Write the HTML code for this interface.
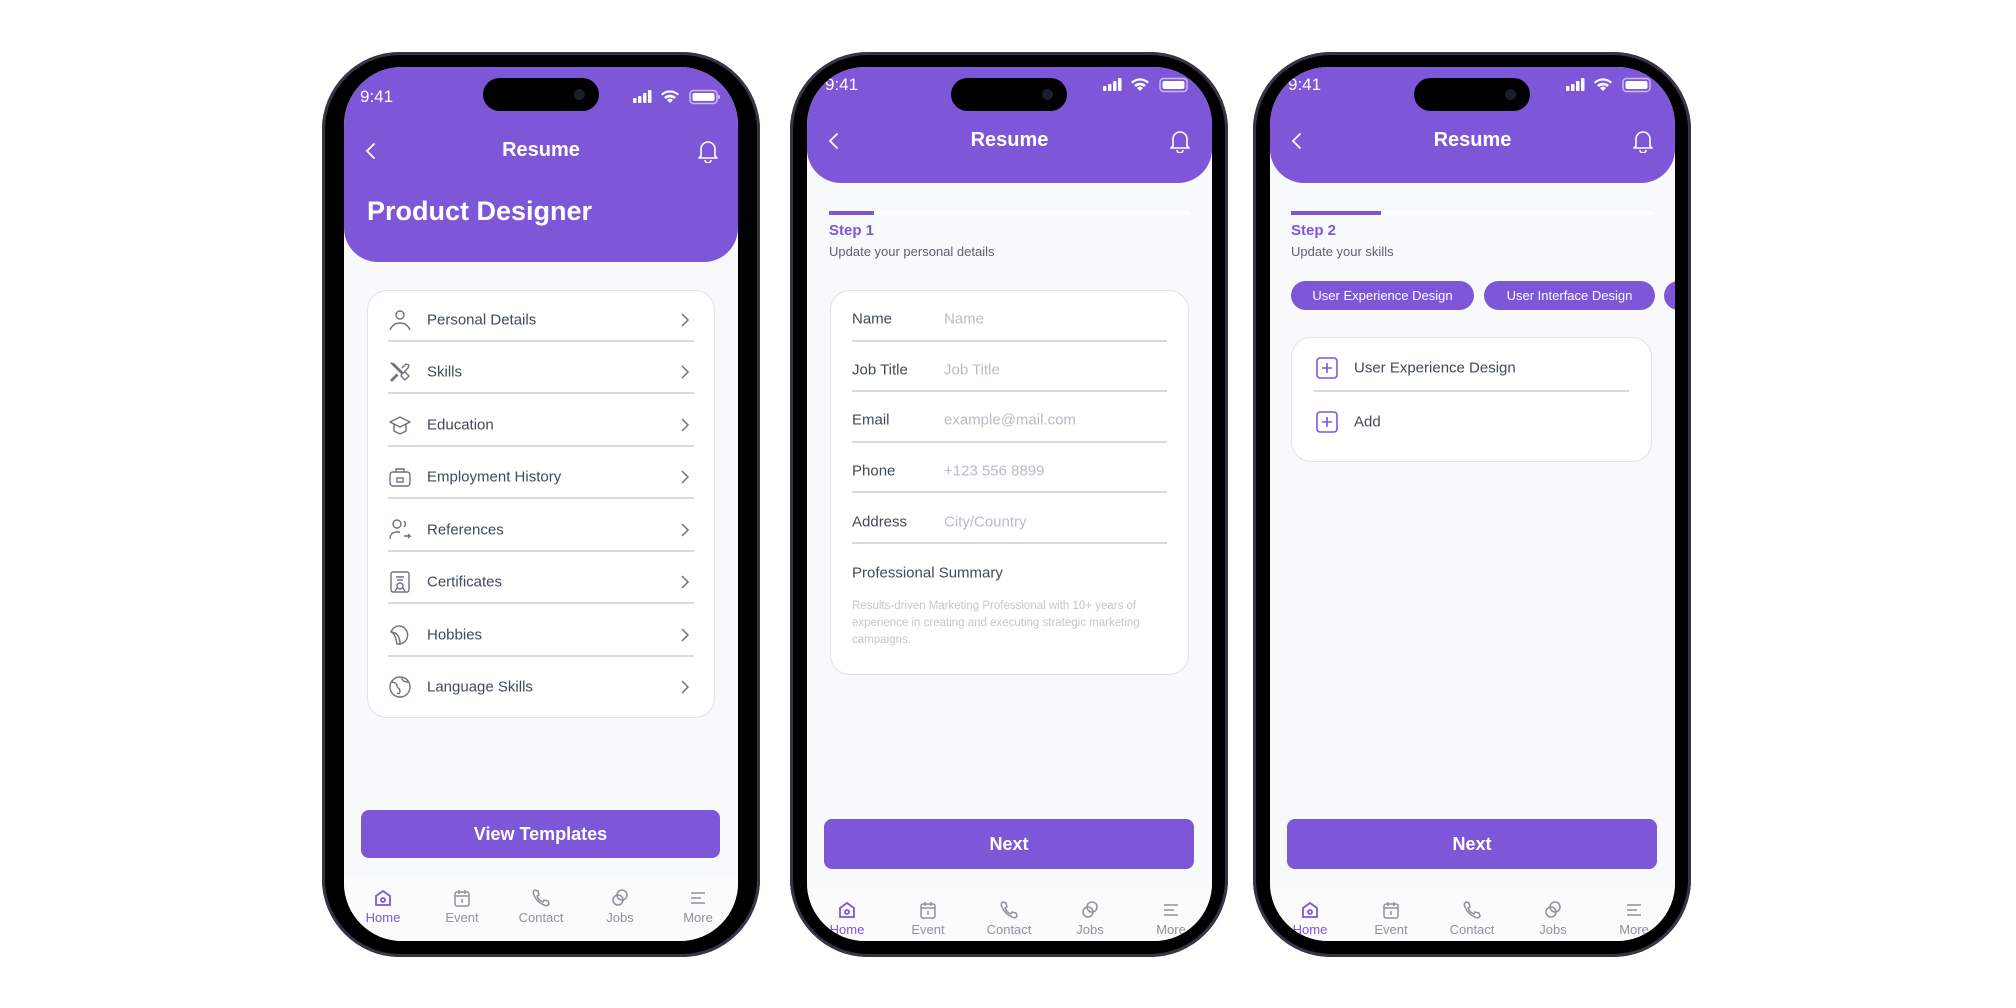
<!DOCTYPE html>
<html><head><meta charset="utf-8"><style>
*{margin:0;padding:0;box-sizing:border-box}
body{width:2016px;height:1008px;background:#fff;position:relative;overflow:hidden;font-family:"Liberation Sans",sans-serif}
.ph{position:absolute;top:52px;width:438px;height:905px;border-radius:78px;background:#000;box-shadow:0 0 0 3px #3b3248 inset}
.sc{position:absolute;top:15px;height:874px;border-radius:58px;overflow:hidden;background:#f8f9fb}
.a{position:absolute}
.hd{position:absolute;left:0;top:0;width:100%;background:#7e57d9;border-radius:0 0 34px 34px}
.time{position:absolute;color:#fff;font-size:17px}
.isl{position:absolute;background:#000;border-radius:22px;height:33px;width:116px}
.isl:after{content:"";position:absolute;right:14px;top:11px;width:11px;height:11px;border-radius:50%;background:#1a1f2e}
.ttl{position:absolute;width:100%;text-align:center;color:#fff;font-weight:bold;font-size:20px}
.card{position:absolute;background:#fff;border:1.5px solid #dfe2ea;border-radius:20px}
.row{position:absolute;height:1.5px;background:#d6dae2}
.lbl{position:absolute;color:#3f4a5c;font-size:15px;transform:translateY(-50%);white-space:nowrap}
.pl{position:absolute;color:#b8bcc6;font-size:15px;transform:translateY(-50%);white-space:nowrap}
.btn{position:absolute;background:#7e57d9;border-radius:8px;color:#fff;font-weight:bold;font-size:18px;display:flex;align-items:center;justify-content:center}
.nav{position:absolute;left:0;width:100%;height:90px;background:#fbfbfc}
.ni{position:absolute;width:70px;margin-left:-35px;text-align:center;font-size:13px;color:#8e929c}
.ni svg{display:block;margin:0 auto 2px}
.ni.on{color:#7e57d9}
.chip{position:absolute;height:29px;border-radius:15px;background:#7e57d9;color:#fff;font-size:13px;line-height:29px;text-align:center;white-space:nowrap}
.ic{position:absolute;transform:translateY(-50%)}
.chev{position:absolute;transform:translateY(-50%)}
</style></head><body>

<!-- ===== PHONE 1 ===== -->
<div class="ph" style="left:322px">
 <div class="sc" style="left:22px;width:394px">
  <div class="hd" style="height:195px"></div>
  <div class="time" style="left:16px;top:20px">9:41</div>
  <div class="isl" style="left:139px;top:11px"></div>
  <svg class="a" style="left:289px;top:22px" width="88" height="16" viewBox="0 0 88 16"><g fill="#fff"><rect x="0" y="9" width="3.5" height="5" rx="1"/><rect x="5" y="7" width="3.5" height="7" rx="1"/><rect x="10" y="4" width="3.5" height="10" rx="1"/><rect x="15" y="1" width="3.5" height="13" rx="1"/><path d="M37 14l3-3a4 4 0 00-6 0zM31 8a9 9 0 0112 0l-2 2a6 6 0 00-8 0zM28 5a13 13 0 0118 0l-1.5 1.5a11 11 0 00-15 0z"/><rect x="57" y="1.5" width="27" height="13" rx="3.5" fill="none" stroke="#fff" stroke-width="1.5" opacity=".6"/><rect x="59.5" y="4" width="22" height="8" rx="2"/><rect x="85" y="6" width="2" height="4" rx="1" opacity=".6"/></g></svg>
  <svg class="a" style="left:20px;top:75px" width="14" height="18" viewBox="0 0 14 18"><path d="M10 2L3 9l7 7" fill="none" stroke="#fff" stroke-width="1.8" stroke-linecap="round"/></svg>
  <div class="ttl" style="top:72px">Resume</div>
  <svg class="a" style="left:353px;top:72px" width="22" height="24" viewBox="0 0 22 24"><path d="M4 17V10a7 7 0 0114 0v7l2 2H2zM8 21a3 3 0 006 0" fill="none" stroke="#fff" stroke-width="1.6" stroke-linejoin="round"/></svg>
  <div class="a" style="left:23px;top:129px;color:#fff;font-weight:bold;font-size:27px">Product Designer</div>

  <div class="card" style="left:23px;top:223px;width:348px;height:428px"></div>
  <div class="row" style="left:44px;width:306px;top:273px"></div>
  <div class="row" style="left:44px;width:306px;top:325px"></div>
  <div class="row" style="left:44px;width:306px;top:378px"></div>
  <div class="row" style="left:44px;width:306px;top:430px"></div>
  <div class="row" style="left:44px;width:306px;top:483px"></div>
  <div class="row" style="left:44px;width:306px;top:535px"></div>
  <div class="row" style="left:44px;width:306px;top:588px"></div>

  <svg class="ic" style="left:44px;top:253px" width="24" height="24" viewBox="0 0 24 24" fill="none" stroke="#6b7280" stroke-width="1.4"><circle cx="12" cy="7" r="4"/><path d="M2 22c2-5 6-7 10-7s8 2 10 7"/></svg>
  <svg class="ic" style="left:44px;top:305px" width="24" height="24" viewBox="0 0 24 24" fill="none" stroke="#6b7280" stroke-width="1.4" stroke-linejoin="round"><path d="M3 3l3 1 9 9 2-1 4 4-4 4-4-4 1-2-9-9zM14 8l4-4 3 1-1 3-4 4M9 14l-6 6 1 1 6-6"/></svg>
  <svg class="ic" style="left:44px;top:358px" width="24" height="24" viewBox="0 0 24 24" fill="none" stroke="#6b7280" stroke-width="1.4" stroke-linejoin="round"><path d="M2 9l10-5 10 5-10 5zM6 11v7l6 3 6-3v-7"/></svg>
  <svg class="ic" style="left:44px;top:410px" width="24" height="24" viewBox="0 0 24 24" fill="none" stroke="#6b7280" stroke-width="1.4"><rect x="2" y="7" width="20" height="14" rx="3"/><path d="M8 7V4h8v3"/><rect x="9" y="13" width="6" height="4"/></svg>
  <svg class="ic" style="left:44px;top:463px" width="24" height="24" viewBox="0 0 24 24" fill="none" stroke="#6b7280" stroke-width="1.4"><circle cx="9" cy="6" r="4"/><path d="M2 21c0-5 3-7 7-7h3M16 3a4 4 0 010 6M16 18h6l-2-2M22 18l-2 2"/></svg>
  <svg class="ic" style="left:44px;top:515px" width="24" height="24" viewBox="0 0 24 24" fill="none" stroke="#6b7280" stroke-width="1.4"><rect x="3" y="2" width="18" height="20" rx="2"/><path d="M8 7h8M9 10h6"/><circle cx="12" cy="16" r="3"/><path d="M9 18l-2 3M15 18l2 3"/></svg>
  <svg class="ic" style="left:44px;top:568px" width="24" height="24" viewBox="0 0 24 24" fill="none" stroke="#6b7280" stroke-width="1.4"><path d="M12 3a9 9 0 11-3 18C8 14 6 10 3 9a9 9 0 019-6zM3 9c5 0 9 4 9 12"/></svg>
  <svg class="ic" style="left:44px;top:620px" width="24" height="24" viewBox="0 0 24 24" fill="none" stroke="#6b7280" stroke-width="1.4"><circle cx="12" cy="12" r="10"/><path d="M4 7c3 0 5 2 5 4s3 2 3 5-2 3-3 2M14 3c0 3 3 4 6 4"/></svg>

  <div class="lbl" style="left:83px;top:253px">Personal Details</div>
  <div class="lbl" style="left:83px;top:305px">Skills</div>
  <div class="lbl" style="left:83px;top:358px">Education</div>
  <div class="lbl" style="left:83px;top:410px">Employment History</div>
  <div class="lbl" style="left:83px;top:463px">References</div>
  <div class="lbl" style="left:83px;top:515px">Certificates</div>
  <div class="lbl" style="left:83px;top:568px">Hobbies</div>
  <div class="lbl" style="left:83px;top:620px">Language Skills</div>

  <svg class="chev" style="left:336px;top:253px" width="10" height="14" viewBox="0 0 10 14"><path d="M2 1l6 6-6 6" fill="none" stroke="#6b7280" stroke-width="1.5"/></svg>
  <svg class="chev" style="left:336px;top:305px" width="10" height="14" viewBox="0 0 10 14"><path d="M2 1l6 6-6 6" fill="none" stroke="#6b7280" stroke-width="1.5"/></svg>
  <svg class="chev" style="left:336px;top:358px" width="10" height="14" viewBox="0 0 10 14"><path d="M2 1l6 6-6 6" fill="none" stroke="#6b7280" stroke-width="1.5"/></svg>
  <svg class="chev" style="left:336px;top:410px" width="10" height="14" viewBox="0 0 10 14"><path d="M2 1l6 6-6 6" fill="none" stroke="#6b7280" stroke-width="1.5"/></svg>
  <svg class="chev" style="left:336px;top:463px" width="10" height="14" viewBox="0 0 10 14"><path d="M2 1l6 6-6 6" fill="none" stroke="#6b7280" stroke-width="1.5"/></svg>
  <svg class="chev" style="left:336px;top:515px" width="10" height="14" viewBox="0 0 10 14"><path d="M2 1l6 6-6 6" fill="none" stroke="#6b7280" stroke-width="1.5"/></svg>
  <svg class="chev" style="left:336px;top:568px" width="10" height="14" viewBox="0 0 10 14"><path d="M2 1l6 6-6 6" fill="none" stroke="#6b7280" stroke-width="1.5"/></svg>
  <svg class="chev" style="left:336px;top:620px" width="10" height="14" viewBox="0 0 10 14"><path d="M2 1l6 6-6 6" fill="none" stroke="#6b7280" stroke-width="1.5"/></svg>

  <div class="btn" style="left:17px;top:743px;width:359px;height:48px">View Templates</div>
  <div class="nav" style="top:809px"></div>
  <div class="ni on" style="left:39px;top:821px"><svg width="20" height="20" viewBox="0 0 20 20" fill="none" stroke="#7e57d9" stroke-width="1.8"><path d="M3 8l7-5 7 5v9H3z"/><circle cx="10" cy="12" r="2"/></svg>Home</div>
  <div class="ni" style="left:118px;top:821px"><svg width="20" height="20" viewBox="0 0 20 20" fill="none" stroke="#8e929c" stroke-width="1.5"><rect x="3" y="4" width="14" height="14" rx="2"/><path d="M3 8h14M7 2v4M13 2v4M10 11v4"/></svg>Event</div>
  <div class="ni" style="left:197px;top:821px"><svg width="20" height="20" viewBox="0 0 20 20" fill="none" stroke="#8e929c" stroke-width="1.5"><path d="M4 2l3 1 1 4-2 1c1 3 3 5 6 6l1-2 4 1 1 3c-1 2-3 2-5 1C8 15 5 12 3 7 2 5 2 3 4 2z"/></svg>Contact</div>
  <div class="ni" style="left:276px;top:821px"><svg width="20" height="20" viewBox="0 0 20 20" fill="none" stroke="#8e929c" stroke-width="1.5"><circle cx="8" cy="12" r="5"/><circle cx="12" cy="7" r="5"/></svg>Jobs</div>
  <div class="ni" style="left:354px;top:821px"><svg width="20" height="20" viewBox="0 0 20 20" fill="none" stroke="#8e929c" stroke-width="1.5"><path d="M3 5h14M3 10h10M3 15h14"/></svg>More</div>
 </div>
</div>

<!-- ===== PHONE 2 ===== -->
<div class="ph" style="left:790px">
 <div class="sc" style="left:17px;width:405px">
  <div class="hd" style="height:116px"></div>
  <div class="time" style="left:18px;top:8px">9:41</div>
  <div class="isl" style="left:144px;top:11px"></div>
  <svg class="a" style="left:296px;top:10px" width="88" height="16" viewBox="0 0 88 16"><g fill="#fff"><rect x="0" y="9" width="3.5" height="5" rx="1"/><rect x="5" y="7" width="3.5" height="7" rx="1"/><rect x="10" y="4" width="3.5" height="10" rx="1"/><rect x="15" y="1" width="3.5" height="13" rx="1"/><path d="M37 14l3-3a4 4 0 00-6 0zM31 8a9 9 0 0112 0l-2 2a6 6 0 00-8 0zM28 5a13 13 0 0118 0l-1.5 1.5a11 11 0 00-15 0z"/><rect x="57" y="1.5" width="27" height="13" rx="3.5" fill="none" stroke="#fff" stroke-width="1.5" opacity=".6"/><rect x="59.5" y="4" width="22" height="8" rx="2"/></g></svg>
  <svg class="a" style="left:20px;top:65px" width="14" height="18" viewBox="0 0 14 18"><path d="M10 2L3 9l7 7" fill="none" stroke="#fff" stroke-width="1.8" stroke-linecap="round"/></svg>
  <div class="ttl" style="top:62px">Resume</div>
  <svg class="a" style="left:362px;top:62px" width="22" height="24" viewBox="0 0 22 24"><path d="M4 17V10a7 7 0 0114 0v7l2 2H2zM8 21a3 3 0 006 0" fill="none" stroke="#fff" stroke-width="1.6" stroke-linejoin="round"/></svg>

  <div class="a" style="left:22px;top:144px;width:361px;height:4px;background:#fff"></div>
  <div class="a" style="left:22px;top:144px;width:45px;height:4px;background:#7e57d9"></div>
  <div class="a" style="left:22px;top:155px;color:#7e57d9;font-weight:bold;font-size:15px">Step 1</div>
  <div class="a" style="left:22px;top:177px;color:#5b616d;font-size:13px">Update your personal details</div>

  <div class="card" style="left:23px;top:223px;width:359px;height:385px"></div>
  <div class="lbl" style="left:45px;top:252px">Name</div><div class="pl" style="left:137px;top:252px">Name</div>
  <div class="row" style="left:45px;width:315px;top:273px"></div>
  <div class="lbl" style="left:45px;top:303px">Job Title</div><div class="pl" style="left:137px;top:303px">Job Title</div>
  <div class="row" style="left:45px;width:315px;top:323px"></div>
  <div class="lbl" style="left:45px;top:353px">Email</div><div class="pl" style="left:137px;top:353px">example@mail.com</div>
  <div class="row" style="left:45px;width:315px;top:374px"></div>
  <div class="lbl" style="left:45px;top:404px">Phone</div><div class="pl" style="left:137px;top:404px">+123 556 8899</div>
  <div class="row" style="left:45px;width:315px;top:424px"></div>
  <div class="lbl" style="left:45px;top:455px">Address</div><div class="pl" style="left:137px;top:455px">City/Country</div>
  <div class="row" style="left:45px;width:315px;top:475px"></div>
  <div class="lbl" style="left:45px;top:506px">Professional Summary</div>
  <div class="a" style="left:45px;top:531px;width:318px;color:#c3c6cd;font-size:11.5px;line-height:17px">Results-driven Marketing Professional with 10+ years of experience in creating and executing strategic marketing campaigns.</div>

  <div class="btn" style="left:17px;top:752px;width:370px;height:50px">Next</div>
  <div class="nav" style="top:820px"></div>
  <div class="ni on" style="left:40px;top:833px"><svg width="20" height="20" viewBox="0 0 20 20" fill="none" stroke="#7e57d9" stroke-width="1.8"><path d="M3 8l7-5 7 5v9H3z"/><circle cx="10" cy="12" r="2"/></svg>Home</div>
  <div class="ni" style="left:121px;top:833px"><svg width="20" height="20" viewBox="0 0 20 20" fill="none" stroke="#8e929c" stroke-width="1.5"><rect x="3" y="4" width="14" height="14" rx="2"/><path d="M3 8h14M7 2v4M13 2v4M10 11v4"/></svg>Event</div>
  <div class="ni" style="left:202px;top:833px"><svg width="20" height="20" viewBox="0 0 20 20" fill="none" stroke="#8e929c" stroke-width="1.5"><path d="M4 2l3 1 1 4-2 1c1 3 3 5 6 6l1-2 4 1 1 3c-1 2-3 2-5 1C8 15 5 12 3 7 2 5 2 3 4 2z"/></svg>Contact</div>
  <div class="ni" style="left:283px;top:833px"><svg width="20" height="20" viewBox="0 0 20 20" fill="none" stroke="#8e929c" stroke-width="1.5"><circle cx="8" cy="12" r="5"/><circle cx="12" cy="7" r="5"/></svg>Jobs</div>
  <div class="ni" style="left:364px;top:833px"><svg width="20" height="20" viewBox="0 0 20 20" fill="none" stroke="#8e929c" stroke-width="1.5"><path d="M3 5h14M3 10h10M3 15h14"/></svg>More</div>
 </div>
</div>

<!-- ===== PHONE 3 ===== -->
<div class="ph" style="left:1253px">
 <div class="sc" style="left:17px;width:405px">
  <div class="hd" style="height:116px"></div>
  <div class="time" style="left:18px;top:8px">9:41</div>
  <div class="isl" style="left:144px;top:11px"></div>
  <svg class="a" style="left:296px;top:10px" width="88" height="16" viewBox="0 0 88 16"><g fill="#fff"><rect x="0" y="9" width="3.5" height="5" rx="1"/><rect x="5" y="7" width="3.5" height="7" rx="1"/><rect x="10" y="4" width="3.5" height="10" rx="1"/><rect x="15" y="1" width="3.5" height="13" rx="1"/><path d="M37 14l3-3a4 4 0 00-6 0zM31 8a9 9 0 0112 0l-2 2a6 6 0 00-8 0zM28 5a13 13 0 0118 0l-1.5 1.5a11 11 0 00-15 0z"/><rect x="57" y="1.5" width="27" height="13" rx="3.5" fill="none" stroke="#fff" stroke-width="1.5" opacity=".6"/><rect x="59.5" y="4" width="22" height="8" rx="2"/></g></svg>
  <svg class="a" style="left:20px;top:65px" width="14" height="18" viewBox="0 0 14 18"><path d="M10 2L3 9l7 7" fill="none" stroke="#fff" stroke-width="1.8" stroke-linecap="round"/></svg>
  <div class="ttl" style="top:62px">Resume</div>
  <svg class="a" style="left:362px;top:62px" width="22" height="24" viewBox="0 0 22 24"><path d="M4 17V10a7 7 0 0114 0v7l2 2H2zM8 21a3 3 0 006 0" fill="none" stroke="#fff" stroke-width="1.6" stroke-linejoin="round"/></svg>

  <div class="a" style="left:21px;top:144px;width:361px;height:4px;background:#fff"></div>
  <div class="a" style="left:21px;top:144px;width:90px;height:4px;background:#7e57d9"></div>
  <div class="a" style="left:21px;top:155px;color:#7e57d9;font-weight:bold;font-size:15px">Step 2</div>
  <div class="a" style="left:21px;top:177px;color:#5b616d;font-size:13px">Update your skills</div>
  <div class="chip" style="left:21px;top:214px;width:183px">User Experience Design</div>
  <div class="chip" style="left:214px;top:214px;width:171px">User Interface Design</div>
  <div class="chip" style="left:394px;top:214px;width:60px"></div>

  <div class="card" style="left:21px;top:270px;width:361px;height:125px"></div>
  <svg class="ic" style="left:46px;top:301px" width="22" height="22" viewBox="0 0 22 22" fill="none" stroke="#7e57d9" stroke-width="1.6"><rect x="1" y="1" width="20" height="20" rx="3"/><path d="M11 6v10M6 11h10"/></svg>
  <div class="lbl" style="left:84px;top:301px">User Experience Design</div>
  <div class="row" style="left:44px;width:315px;top:323px"></div>
  <svg class="ic" style="left:46px;top:355px" width="22" height="22" viewBox="0 0 22 22" fill="none" stroke="#7e57d9" stroke-width="1.6"><rect x="1" y="1" width="20" height="20" rx="3"/><path d="M11 6v10M6 11h10"/></svg>
  <div class="lbl" style="left:84px;top:355px">Add</div>

  <div class="btn" style="left:17px;top:752px;width:370px;height:50px">Next</div>
  <div class="nav" style="top:820px"></div>
  <div class="ni on" style="left:40px;top:833px"><svg width="20" height="20" viewBox="0 0 20 20" fill="none" stroke="#7e57d9" stroke-width="1.8"><path d="M3 8l7-5 7 5v9H3z"/><circle cx="10" cy="12" r="2"/></svg>Home</div>
  <div class="ni" style="left:121px;top:833px"><svg width="20" height="20" viewBox="0 0 20 20" fill="none" stroke="#8e929c" stroke-width="1.5"><rect x="3" y="4" width="14" height="14" rx="2"/><path d="M3 8h14M7 2v4M13 2v4M10 11v4"/></svg>Event</div>
  <div class="ni" style="left:202px;top:833px"><svg width="20" height="20" viewBox="0 0 20 20" fill="none" stroke="#8e929c" stroke-width="1.5"><path d="M4 2l3 1 1 4-2 1c1 3 3 5 6 6l1-2 4 1 1 3c-1 2-3 2-5 1C8 15 5 12 3 7 2 5 2 3 4 2z"/></svg>Contact</div>
  <div class="ni" style="left:283px;top:833px"><svg width="20" height="20" viewBox="0 0 20 20" fill="none" stroke="#8e929c" stroke-width="1.5"><circle cx="8" cy="12" r="5"/><circle cx="12" cy="7" r="5"/></svg>Jobs</div>
  <div class="ni" style="left:364px;top:833px"><svg width="20" height="20" viewBox="0 0 20 20" fill="none" stroke="#8e929c" stroke-width="1.5"><path d="M3 5h14M3 10h10M3 15h14"/></svg>More</div>
 </div>
</div>

</body></html>
